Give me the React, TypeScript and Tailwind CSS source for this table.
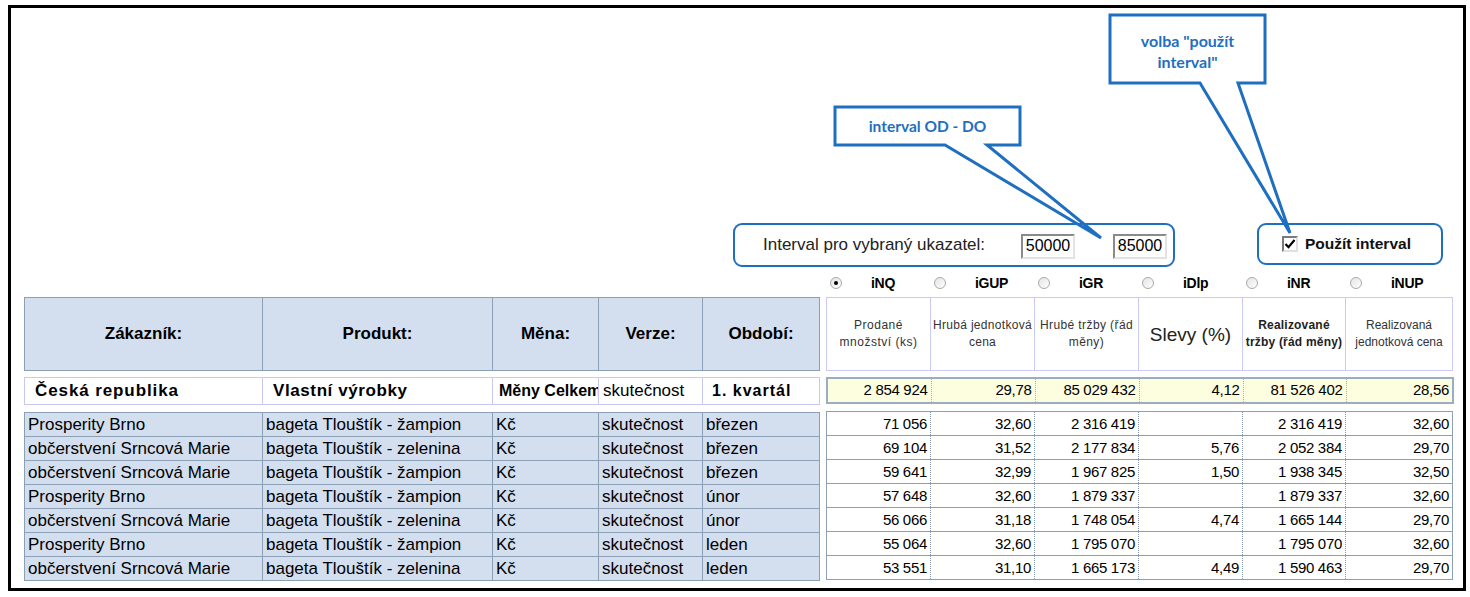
import React from "react";

type Row = {
  customer: string;
  product: string;
  currency: string;
  version: string;
  period: string;
  values: string[];
};

const rows: Row[] = [
  { customer: "Prosperity Brno", product: "bageta Tlouštík - žampion", currency: "Kč", version: "skutečnost", period: "březen", values: ["71 056", "32,60", "2 316 419", "", "2 316 419", "32,60"] },
  { customer: "občerstvení Srncová Marie", product: "bageta Tlouštík - zelenina", currency: "Kč", version: "skutečnost", period: "březen", values: ["69 104", "31,52", "2 177 834", "5,76", "2 052 384", "29,70"] },
  { customer: "občerstvení Srncová Marie", product: "bageta Tlouštík - žampion", currency: "Kč", version: "skutečnost", period: "březen", values: ["59 641", "32,99", "1 967 825", "1,50", "1 938 345", "32,50"] },
  { customer: "Prosperity Brno", product: "bageta Tlouštík - žampion", currency: "Kč", version: "skutečnost", period: "únor", values: ["57 648", "32,60", "1 879 337", "", "1 879 337", "32,60"] },
  { customer: "občerstvení Srncová Marie", product: "bageta Tlouštík - zelenina", currency: "Kč", version: "skutečnost", period: "únor", values: ["56 066", "31,18", "1 748 054", "4,74", "1 665 144", "29,70"] },
  { customer: "Prosperity Brno", product: "bageta Tlouštík - žampion", currency: "Kč", version: "skutečnost", period: "leden", values: ["55 064", "32,60", "1 795 070", "", "1 795 070", "32,60"] },
  { customer: "občerstvení Srncová Marie", product: "bageta Tlouštík - zelenina", currency: "Kč", version: "skutečnost", period: "leden", values: ["53 551", "31,10", "1 665 173", "4,49", "1 590 463", "29,70"] },
];

const totals = ["2 854 924", "29,78", "85 029 432", "4,12", "81 526 402", "28,56"];
const indicators = ["iNQ", "iGUP", "iGR", "iDlp", "iNR", "iNUP"];

const LeftCols = () => (
  <colgroup>
    <col className="w-[238px]" />
    <col className="w-[230px]" />
    <col className="w-[106px]" />
    <col className="w-[104px]" />
    <col className="w-[117px]" />
  </colgroup>
);

const RightCols = () => (
  <colgroup>
    <col className="w-[104px]" />
    <col className="w-[104px]" />
    <col className="w-[104px]" />
    <col className="w-[104px]" />
    <col className="w-[103px]" />
    <col className="w-[107px]" />
  </colgroup>
);

const Radio = ({ checked }: { checked?: boolean }) => (
  <span className="flex h-[12px] w-[12px] items-center justify-center rounded-full border border-[#a8a8a8] bg-gradient-to-br from-[#e4e4e4] to-white">
    {checked && <span className="h-[4px] w-[4px] rounded-full bg-black" />}
  </span>
);

const Callouts = () => (
  <>
    <svg className="pointer-events-none absolute left-0 top-0" width="1470" height="597">
      <path
        d="M835 107 H1020 V145 H987 L1101 238 L945 145 H835 Z"
        fill="none"
        stroke="#1f6fc1"
        strokeWidth="3"
        strokeLinejoin="miter"
      />
      <path
        d="M1110 15 H1265 V83 H1238 L1290 233 L1200 83 H1110 Z"
        fill="none"
        stroke="#1f6fc1"
        strokeWidth="3"
        strokeLinejoin="miter"
      />
    </svg>
    <div className="absolute left-[835px] top-[108px] flex h-[38px] w-[185px] items-center justify-center font-['Lato',sans-serif] text-[15.5px] font-bold text-[#1f6fc1]">
      interval OD - DO
    </div>
    <div className="absolute left-[1110px] top-[17px] flex h-[68px] w-[155px] items-center justify-center text-center font-['Lato',sans-serif] text-[16px] leading-[21px] font-bold text-[#1f6fc1]">
      volba "použít
      <br />
      interval"
    </div>
  </>
);

export default function App() {
  return (
    <div className="relative h-[597px] w-[1470px] overflow-hidden bg-white pl-[8px] pt-[5px] font-['Liberation_Sans',Arial,sans-serif] text-black">
      <div className="h-[586px] w-[1458px] border-[3px] border-black">
        {/* interval controls */}
        <div className="mt-[215px] flex items-start pl-[722px]">
          <div className="flex h-[44px] w-[442px] items-center rounded-[9px] border-2 border-[#1f6fc1] pl-[28px] pr-[6px]">
            <span className="text-[17px] text-[#222]">Interval pro vybraný ukazatel:</span>
            <span className="ml-auto mt-[2px] flex h-[25px] w-[54px] items-center justify-center border-2 border-b-[#e2e2e2] border-l-[#8a8a8a] border-r-[#e2e2e2] border-t-[#8a8a8a] text-[16px]">
              50000
            </span>
            <span className="ml-[38px] mt-[2px] flex h-[25px] w-[54px] items-center justify-center border-2 border-b-[#e2e2e2] border-l-[#8a8a8a] border-r-[#e2e2e2] border-t-[#8a8a8a] text-[16px]">
              85000
            </span>
          </div>
          <div className="ml-[82px] flex h-[42px] w-[186px] items-center rounded-[9px] border-2 border-[#1f6fc1] pl-[23px]">
            <span className="flex h-[16px] w-[16px] items-center justify-center border-2 border-b-[#e0e0e0] border-l-[#7a7a7a] border-r-[#e0e0e0] border-t-[#7a7a7a] bg-white">
              <svg width="12" height="12" viewBox="0 0 12 12">
                <path d="M1.5 6 L4.5 9.2 L10.5 2" fill="none" stroke="#000" strokeWidth="2.2" />
              </svg>
            </span>
            <span className="ml-[7px] text-[15.5px] font-bold text-[#111]">Použít interval</span>
          </div>
        </div>

        {/* indicator radios */}
        <div className="mt-[4px] flex h-[24px] items-center pl-[815px]">
          {indicators.map((name, i) => (
            <div key={name} className="flex w-[104px] items-center">
              <span className="ml-[4px]">
                <Radio checked={i === 0} />
              </span>
              <span className="ml-[29px] text-[14px] font-bold tracking-[-0.3px]">{name}</span>
            </div>
          ))}
        </div>

        {/* tables */}
        <div className="mt-[2px] flex gap-[7px] pl-[13px]">
          <div className="flex w-[795px] flex-col">
            <table className="w-[795px] table-fixed border-collapse">
              <LeftCols />
              <tbody>
                <tr className="h-[73px] bg-[#d3deef] text-[17px] font-bold">
                  <td className="border border-[#8ba0b5] text-center">Zákazník:</td>
                  <td className="border border-[#8ba0b5] text-center">Produkt:</td>
                  <td className="border border-[#8ba0b5] text-center">Měna:</td>
                  <td className="border border-[#8ba0b5] text-center">Verze:</td>
                  <td className="border border-[#8ba0b5] text-center">Období:</td>
                </tr>
              </tbody>
            </table>
            <table className="mt-[6px] w-[795px] table-fixed border-collapse">
              <LeftCols />
              <tbody>
                <tr className="h-[25px] bg-white">
                  <td className="overflow-hidden whitespace-nowrap border border-[#c8c8f4] pl-[10px] text-[17px] font-bold tracking-[0.9px]">Česká republika</td>
                  <td className="overflow-hidden whitespace-nowrap border border-[#c8c8f4] pl-[10px] text-[17px] font-bold tracking-[0.6px]">Vlastní výrobky</td>
                  <td className="overflow-hidden whitespace-nowrap border border-[#c8c8f4] pl-[6px] text-[16px] font-bold">Měny Celkem</td>
                  <td className="overflow-hidden whitespace-nowrap border border-[#c8c8f4] pl-[4px] text-[17px]">skutečnost</td>
                  <td className="overflow-hidden whitespace-nowrap border border-[#c8c8f4] pl-[9px] text-[16px] font-bold tracking-[1px]">1. kvartál</td>
                </tr>
              </tbody>
            </table>
            <table className="mt-[7px] w-[795px] table-fixed border-collapse text-[17px] leading-none">
              <LeftCols />
              <tbody>
                {rows.map((r, i) => (
                  <tr key={i} className="h-[24px] bg-[#d3deef]">
                    <td className="overflow-hidden whitespace-nowrap border border-[#8ba0b5] pl-[3px]">{r.customer}</td>
                    <td className="overflow-hidden whitespace-nowrap border border-[#8ba0b5] pl-[3px]">{r.product}</td>
                    <td className="overflow-hidden whitespace-nowrap border border-[#8ba0b5] pl-[3px]">{r.currency}</td>
                    <td className="overflow-hidden whitespace-nowrap border border-[#8ba0b5] pl-[3px]">{r.version}</td>
                    <td className="overflow-hidden whitespace-nowrap border border-[#8ba0b5] pl-[3px]">{r.period}</td>
                  </tr>
                ))}
              </tbody>
            </table>
          </div>

          <div className="flex w-[626px] flex-col">
            <table className="w-[626px] table-fixed border-collapse text-[12px] leading-[17px] text-[#333]">
              <RightCols />
              <tbody>
                <tr className="h-[73px] bg-white">
                  <td className="border border-[#cacaf6] text-center tracking-[0.5px]">
                    Prodané
                    <br />
                    množství (ks)
                  </td>
                  <td className="whitespace-nowrap border border-[#cacaf6] text-center tracking-[0.3px]">
                    Hrubá jednotková
                    <br />
                    cena
                  </td>
                  <td className="whitespace-nowrap border border-[#cacaf6] text-center tracking-[0.4px]">
                    Hrubé tržby (řád
                    <br />
                    měny)
                  </td>
                  <td className="border border-[#cacaf6] text-center text-[19px] text-[#222]">Slevy (%)</td>
                  <td className="whitespace-nowrap border border-[#cacaf6] text-center font-bold tracking-[0.2px] text-[#222]">
                    Realizované
                    <br />
                    tržby (řád měny)
                  </td>
                  <td className="whitespace-nowrap border border-[#cacaf6] text-center">
                    Realizovaná
                    <br />
                    jednotková cena
                  </td>
                </tr>
              </tbody>
            </table>
            <table className="mt-[6px] w-[626px] table-fixed border-collapse border-2 border-[#9aaec2] bg-[#fdfde0] text-[15px] tracking-[-0.3px]">
              <RightCols />
              <tbody>
                <tr className="h-[25px]">
                  {totals.map((t, i) => (
                    <td key={i} className="border-r border-dotted border-[#9aaec2] pr-[3px] text-right last:border-r-0">
                      {t}
                    </td>
                  ))}
                </tr>
              </tbody>
            </table>
            <table className="mt-[7px] w-[626px] table-fixed border-collapse border border-[#8ba0b5] text-[15px] leading-none tracking-[-0.3px]">
              <RightCols />
              <tbody>
                {rows.map((r, i) => (
                  <tr key={i} className="h-[24px] border-b border-[#8ba0b5] bg-white">
                    {r.values.map((v, j) => (
                      <td key={j} className="border-r border-dotted border-[#8ba0b5] pr-[3px] text-right">
                        {v}
                      </td>
                    ))}
                  </tr>
                ))}
              </tbody>
            </table>
          </div>
        </div>
      </div>
      <Callouts />
    </div>
  );
}
